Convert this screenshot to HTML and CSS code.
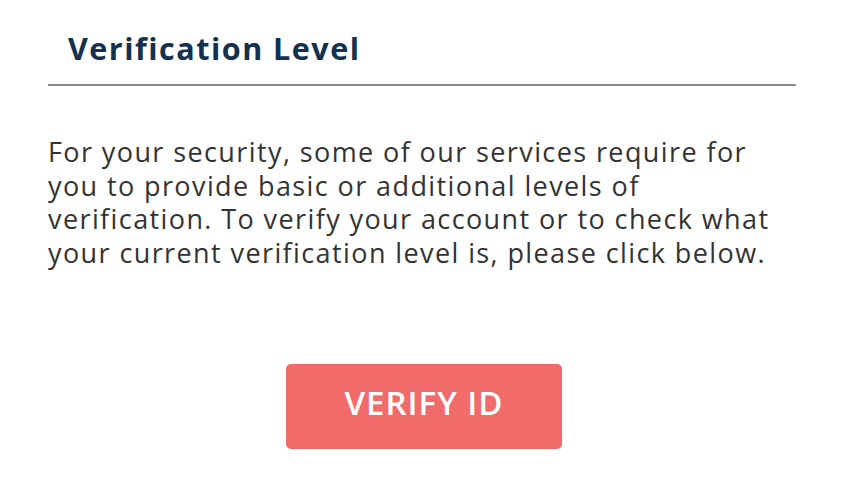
FILE: index.html
```html
<!DOCTYPE html>
<html lang="en">
<head>
    <meta charset="UTF-8">
    <meta name="viewport" content="width=device-width, initial-scale=1.0">
    <title>Verification Level</title>
    <link rel="stylesheet" href="styles.css">
</head>
<body>

<div class="panel">
    <h2 class="panel-title">Verification Level</h2>

    <p class="panel-text">For your security, some of our services require for you to provide basic or additional levels of verification. To verify your account or to check what your current verification level is, please click below.</p>

    <div class="panel-action">
        <button class="verify-btn">VERIFY ID</button>
    </div>
</div>

</body>
</html>
```

FILE: styles.css
```css
body {
    font-family: 'Open Sans', Arial, sans-serif;
    background: #fff;
    margin: 0;
    padding: 0;
}
.panel {
    width: 748px;
    margin-left: 48px;
    padding-top: 29px;
}
.panel-title {
    margin: 0;
    padding: 0 0 17px 20px;
    font-size: 30.5px;
    line-height: 38px;
    font-weight: 700;
    letter-spacing: 1.5px;
    color: #12304f;
    border-bottom: 2px solid #8c8c8c;
}
.panel-text {
    margin: 49px 0 0 0;
    font-size: 27px;
    line-height: 33.5px;
    letter-spacing: 1.4px;
    color: #333;
}
.panel-action {
    display: flex;
    justify-content: center;
    margin-top: 95px;
    padding-left: 4px;
}
.verify-btn {
    width: 276px;
    height: 85px;
    padding: 0 0 9px 0;
    background-color: #f06b6a;
    color: white;
    border: none;
    border-radius: 5px;
    font-family: inherit;
    font-size: 33px;
    font-weight: 600;
    letter-spacing: 1px;
    cursor: pointer;
}
```
